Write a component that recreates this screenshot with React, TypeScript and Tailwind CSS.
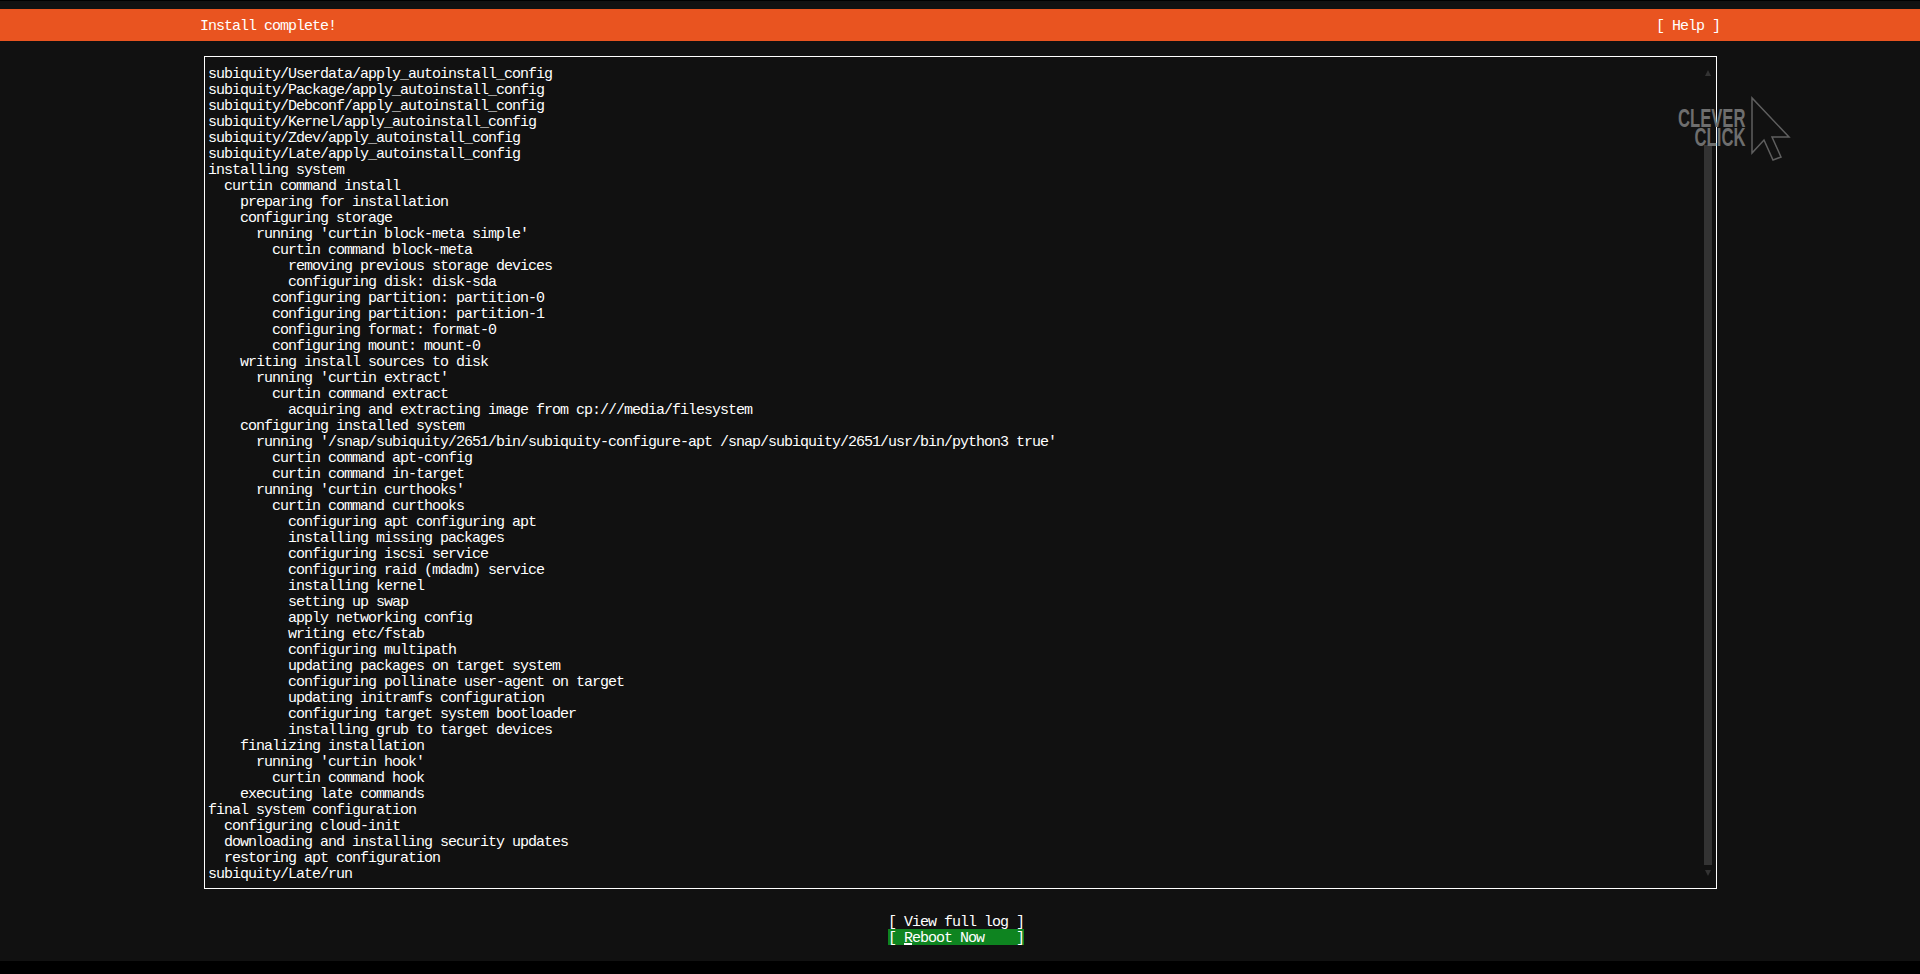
const LOG_LINES = [
  "subiquity/Userdata/apply_autoinstall_config",
  "subiquity/Package/apply_autoinstall_config",
  "subiquity/Debconf/apply_autoinstall_config",
  "subiquity/Kernel/apply_autoinstall_config",
  "subiquity/Zdev/apply_autoinstall_config",
  "subiquity/Late/apply_autoinstall_config",
  "installing system",
  "  curtin command install",
  "    preparing for installation",
  "    configuring storage",
  "      running 'curtin block-meta simple'",
  "        curtin command block-meta",
  "          removing previous storage devices",
  "          configuring disk: disk-sda",
  "        configuring partition: partition-0",
  "        configuring partition: partition-1",
  "        configuring format: format-0",
  "        configuring mount: mount-0",
  "    writing install sources to disk",
  "      running 'curtin extract'",
  "        curtin command extract",
  "          acquiring and extracting image from cp:///media/filesystem",
  "    configuring installed system",
  "      running '/snap/subiquity/2651/bin/subiquity-configure-apt /snap/subiquity/2651/usr/bin/python3 true'",
  "        curtin command apt-config",
  "        curtin command in-target",
  "      running 'curtin curthooks'",
  "        curtin command curthooks",
  "          configuring apt configuring apt",
  "          installing missing packages",
  "          configuring iscsi service",
  "          configuring raid (mdadm) service",
  "          installing kernel",
  "          setting up swap",
  "          apply networking config",
  "          writing etc/fstab",
  "          configuring multipath",
  "          updating packages on target system",
  "          configuring pollinate user-agent on target",
  "          updating initramfs configuration",
  "          configuring target system bootloader",
  "          installing grub to target devices",
  "    finalizing installation",
  "      running 'curtin hook'",
  "        curtin command hook",
  "    executing late commands",
  "final system configuration",
  "  configuring cloud-init",
  "  downloading and installing security updates",
  "  restoring apt configuration",
  "subiquity/Late/run",
];

export default function App() {
  return (
    <div className="relative h-[974px] w-[1920px] overflow-hidden bg-black font-['Liberation_Mono',monospace] text-[15px] leading-4 tracking-[-1.0015px] text-white antialiased">
      <div className="mt-px h-[960px] bg-[#111111] pt-2">
        <div className="flex h-8 items-center justify-between bg-[#e95420] px-[200px] pt-1">
          <span>Install complete!</span>
          <span className="whitespace-pre">[ Help ]</span>
        </div>

        <div className="ml-[204px] mr-[203px] mt-[15px] flex h-[833px] border border-white pl-[3px] pr-1 pt-2">
          <pre className="mt-[2px] flex-1 font-['Liberation_Mono',monospace]">{LOG_LINES.join("\n")}</pre>
          <div className="flex w-2 flex-col items-center">
            <svg width="6" height="6" viewBox="0 0 6 6" className="mt-[5px] shrink-0" fill="#333333">
              <path d="M3 0 L6 6 L0 6 Z" />
            </svg>
            <div className="mt-[69px] h-[720px] w-2 shrink-0 bg-[#333333]" />
            <svg width="6" height="6" viewBox="0 0 6 6" className="mt-[5px] shrink-0" fill="#333333">
              <path d="M0 0 L6 0 L3 6 Z" />
            </svg>
          </div>
        </div>

        <div className="mt-6 flex flex-col items-center pr-2 leading-5">
          <div className="h-4 w-[136px] whitespace-pre">[ View full log ]</div>
          <div className="h-4 w-[136px] whitespace-pre bg-[#0e8420]">
            {"[ "}
            <span className="inline-block h-4 w-2 align-top shadow-[inset_0_-2px_0_#ffffff]">R</span>
            {"eboot Now    ]"}
          </div>
        </div>
      </div>

      {/* watermark */}
      <div className="absolute right-[175px] top-[109px] flex flex-col items-end font-['Liberation_Sans',sans-serif] text-[26px] leading-[19px] font-bold tracking-normal text-[#6e6e6e]">
        <span className="origin-right scale-x-[0.64]">CLEVER</span>
        <span className="origin-right scale-x-[0.64]">CLICK</span>
      </div>
      <svg className="absolute left-[1750px] top-[96px]" width="42" height="66" viewBox="0 0 42 66" fill="none" stroke="#5f5f5f" strokeWidth="1.5">
        <path d="M2 2 V57 L14 44 L23 64 L31 61 L22 41 H39 Z" />
      </svg>
    </div>
  );
}
